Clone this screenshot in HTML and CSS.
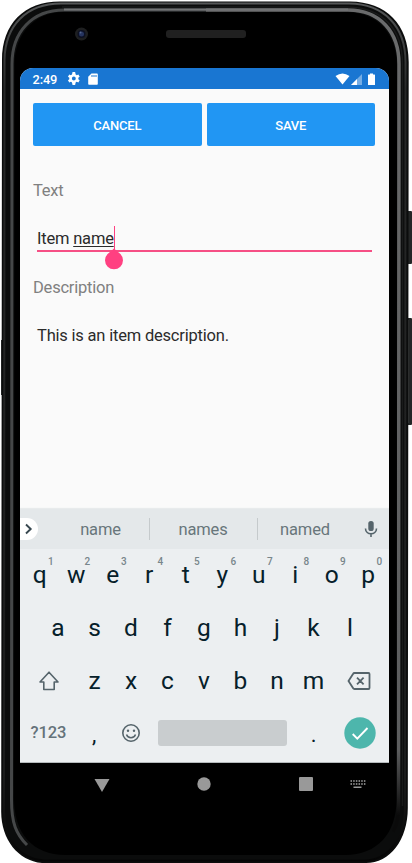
FILE: index.html
```
<!DOCTYPE html>
<html lang="en">
<head>
<meta charset="utf-8">
<title>Edit item</title>
<link rel="stylesheet" href="styles.css">
</head>
<body>
<div class="phone">
<svg class="shell" width="412" height="863" viewBox="0 0 412 863" aria-hidden="true">
  <defs>
    <linearGradient id="rim" x1="0" y1="0" x2="0" y2="1">
      <stop offset="0" stop-color="#6a6b6c"/><stop offset=".9" stop-color="#5c5d5e"/><stop offset=".98" stop-color="#0a0a0a"/>
    </linearGradient>
    <linearGradient id="edge" x1="0" y1="0" x2="0" y2="1">
      <stop offset="0" stop-color="#555758"/><stop offset=".1" stop-color="#272828"/><stop offset=".9" stop-color="#1b1c1c"/><stop offset="1" stop-color="#050505"/>
    </linearGradient>
  </defs>
  <path d="M407 211h4q1 0 1 1v51q0 1-1 1h-4zM407 318h4q1 0 1 1v105q0 1-1 1h-4z" fill="#242626"/>
  <path d="M408.500 320v103" stroke="#3c3e3e"/>
  <path d="M1 340h3v55H1z" fill="#2c2e2e"/>
  <path d="M60 1.500H350C386 2 408.700 24 408.700 62L407.800 808C407.800 840 390 863 366 863H42C18 861 1.200 839 1.200 812L2 60C2 24 24 1.500 60 1.500Z" fill="#0b0c0c"/>
  <path d="M61 3.500H349C384 4 405.500 26 405.500 62L405 808C405 840 387 860.500 364 860.500H44C20 859 4 839 4 812L4.500 60C5 26 26 3.500 61 3.500Z" fill="none" stroke="url(#edge)" stroke-width="2"/>
  <path d="M62 7H348C382 8 402.500 28 402.500 64V806" fill="none" stroke="#191a1a" stroke-width="1.500"/>
  <path d="M206 10H64C32 10 12 32 12 64L11.500 800C11.500 823 16 834 27 845" fill="none" stroke="#454748" stroke-width="3"/>
  <path d="M206 10H348C380 10 399 32 399 64L398.500 800C398.500 817 398 823 393 832" fill="none" stroke="url(#rim)" stroke-width="3.500"/>
  <path d="M64 9.500H348" stroke="#737576" stroke-width="2"/>
  <path d="M64 12H346C376 12 397 32 397 66L396.500 798C397 833 378 855 345 855H66C32 855 14 833 14 798L14.500 66C14.500 34 34 12 64 12Z" fill="#000"/>
  <circle cx="81.500" cy="34" r="6.500" fill="#1e1f20"/><circle cx="81.500" cy="34" r="4" fill="#0c1022"/><circle cx="81.500" cy="34" r="2.500" fill="#26345f"/><circle cx="80.500" cy="32.500" r="1" fill="#52648d"/>
  <rect x="166" y="30" width="80" height="8" rx="3" fill="#202020"/>
</svg>
<main class="screen">
  <header class="status">
    <span class="clock">2:49</span>
    <svg class="gear" width="13" height="13" viewBox="2 2 20 20"><path fill="#fff" fill-rule="evenodd" d="M19.400 13a7.500 7.500 0 0 0 0-2l2.100-1.600-2-3.500-2.500 1a7.300 7.300 0 0 0-1.700-1L14.500 2h-4l-.8 3.900a7.300 7.300 0 0 0-1.700 1l-2.500-1-2 3.500L5.600 11a7.500 7.500 0 0 0 0 2l-2.100 1.600 2 3.500 2.500-1a7.300 7.300 0 0 0 1.700 1l.8 3.900h4l.8-3.900a7.300 7.300 0 0 0 1.700-1l2.500 1 2-3.500zM12.500 9a3 3 0 1 1 0 6 3 3 0 0 1 0-6z"/></svg>
    <svg class="card" width="10" height="12" viewBox="0 0 10 12"><path fill="#fff" fill-rule="evenodd" d="M3.500.5H9q.8 0 .8.800V11q0 .8-.8.800H1q-.8 0-.8-.8V3.800zM3.500 2v2h1V2zm2 0v2h1V2zm2 0v2h1V2z"/></svg>
    <svg class="signals" width="42" height="13" viewBox="0 0 42 13"><path fill="#fff" d="M.5 3Q7.500-2 14.500 3L7.500 11.500z"/><path fill="#75ade5" d="M27 1v11H16z"/><path fill="#fff" d="M22 6v6h-6zM35 1.500V.5h3v1h1.500q.5 0 .5.500v9.500q0 .5-.5.500h-6q-.5 0-.5-.5V2q0-.5.500-.5z"/></svg>
  </header>
  <section class="form">
    <div class="actions"><button>CANCEL</button><button>SAVE</button></div>
    <label class="label first">Text</label>
    <div class="entry focused"><span>Item <u>name</u></span><i class="caret"><svg class="handle" width="20" height="22" viewBox="0 0 20 22"><path fill="#ff4081" d="M10 .5 16.400 6A9 9 0 1 1 3.600 6Z"/></svg></i></div>
    <label class="label second">Description</label>
    <div class="entry desc"><span>This is an item description.</span></div>
  </section>
  <section class="keyboard">
    <div class="suggest">
      <span class="more"><svg width="10" height="12" viewBox="0 0 10 12"><path d="M2 1.500 6.700 6 2 10.500" fill="none" stroke="#37474f" stroke-width="1.900"/></svg></span>
      <span class="word">name</span><span class="word">names</span><span class="word">named</span>
      <svg class="mic" width="14" height="18" viewBox="0 0 14 18"><rect x="4.300" y="1" width="5.400" height="10" rx="2.600" fill="#55646b"/><path d="M1.500 8.500C1.500 15.500 12.500 15.500 12.500 8.500M7 13.500V17" fill="none" stroke="#55646b" stroke-width="1.600"/></svg>
    </div>
    <div class="row">
      <span class="key">q<sup>1</sup></span><span class="key">w<sup>2</sup></span><span class="key">e<sup>3</sup></span><span class="key">r<sup>4</sup></span><span class="key">t<sup>5</sup></span><span class="key">y<sup>6</sup></span><span class="key">u<sup>7</sup></span><span class="key">i<sup>8</sup></span><span class="key">o<sup>9</sup></span><span class="key">p<sup>0</sup></span>
    </div>
    <div class="row">
      <span class="key">a</span><span class="key">s</span><span class="key">d</span><span class="key">f</span><span class="key">g</span><span class="key">h</span><span class="key">j</span><span class="key">k</span><span class="key">l</span>
    </div>
    <div class="row">
      <span class="key wide"><svg width="22" height="22" viewBox="0 0 22 22"><path d="M11 2.200 20 12H16.200V19.500H5.800V12H2Z" fill="none" stroke="#55646b" stroke-width="1.600" stroke-linejoin="round"/></svg></span>
      <span class="key">z</span><span class="key">x</span><span class="key">c</span><span class="key">v</span><span class="key">b</span><span class="key">n</span><span class="key">m</span>
      <span class="key wide"><svg width="24" height="20" viewBox="0 0 24 20"><path d="M7.500 2H21.500Q22.500 2 22.500 3V17Q22.500 18 21.500 18H7.500Q6.500 18 6 17L1.500 10 6 3Q6.500 2 7.500 2ZM10 6.700l6.600 6.600M16.600 6.700l-6.600 6.600" fill="none" stroke="#55646b" stroke-width="1.800"/></svg></span>
    </div>
    <div class="row bottom">
      <span class="key wide mode">?123</span><span class="key punct">,</span>
      <span class="key"><svg width="20" height="20" viewBox="0 0 20 20"><circle cx="10" cy="10" r="8.200" fill="none" stroke="#55646b" stroke-width="1.600"/><circle cx="7" cy="7.800" r="1.200" fill="#55646b"/><circle cx="13" cy="7.800" r="1.200" fill="#55646b"/><path d="M5.500 11.500C7 15.800 13 15.800 14.500 11.500" fill="none" stroke="#55646b" stroke-width="1.500"/></svg></span>
      <span class="space"></span><span class="key punct">.</span>
      <span class="key wide"><svg width="32" height="32" viewBox="0 0 32 32"><circle cx="16" cy="16" r="15.700" fill="#4db6ac"/><path d="m8.700 17 4.600 4.600L23.500 11" fill="none" stroke="#fff" stroke-width="1.900"/></svg></span>
    </div>
  </section>
  <nav class="nav">
    <svg width="369" height="42" viewBox="20 763 369 42"><g fill="#999"><path d="M94.500 779h15l-7.500 13z"/><circle cx="204" cy="784" r="6.700"/><rect x="299" y="777" width="14" height="14" rx="1"/><path d="M353.500 786.500h8v1.500h-8z"/></g><path d="M350.500 781h15M350.500 784h15" stroke="#a5a5a5" stroke-width="1.500" stroke-dasharray="1.500 1.180"/></svg>
  </nav>
</main>
</div>
</body>
</html>
```
FILE: styles.css
```
* { box-sizing: border-box; }
body { margin: 0; background: #fff; font-family: Roboto, sans-serif; }
.phone { position: relative; width: 412px; height: 863px; padding: 68px 23px 0 20px; overflow: hidden; }
.shell { position: absolute; left: 0; top: 0; }
.screen { position: relative; width: 369px; height: 737px; border-radius: 13px 13px 0 0; overflow: hidden; background: #fafafa; }
svg { display: block; }
.status { display: flex; align-items: center; height: 21px; padding: 0 12.500px; background: #1976d2; color: #fff; }
.clock { width: 34px; font-size: 12.800px; letter-spacing: -.1px; font-weight: 500; line-height: 21px; padding-top: 1px; }
.card { margin-left: 8px; }
.signals { margin-left: auto; margin-top: 1px; }
.form { height: 420px; padding: 14px 14px 0 13px; }
.actions { display: grid; grid-template-columns: 1fr 1fr; gap: 5px; height: 43px; }
button { border: 0; border-radius: 2px; background: #2196f3; color: #fff; font: 500 13px Roboto, sans-serif; letter-spacing: -.2px; padding: 1px 0 0; }
.label { display: block; font-size: 16.500px; letter-spacing: -.22px; line-height: 20px; color: #808080; }
.first { margin-top: 35px; }
.entry { display: flex; margin: 0 3px 0 4px; font-size: 16.500px; letter-spacing: -.2px; line-height: 20px; color: #2b2b2b; }
.focused { height: 32px; margin-top: 19px; padding-top: 9px; border-bottom: 2px solid #f64f85; }
u { text-decoration-thickness: 1px; text-underline-offset: 2px; }
.caret { position: relative; width: 1.500px; height: 24px; margin-top: -3px; background: #ff4081; }
.handle { position: absolute; left: -9.500px; top: 22px; }
.second { margin-top: 26px; }
.desc { margin-top: 28px; }
.keyboard { height: 254px; background: #eceff1; border-bottom: 1px solid #b5babc; }
.suggest { display: flex; align-items: center; height: 40px; background: #e4e8ea; box-shadow: 0 -1px 1px #e8ebec; padding-right: 11px; }
.more { display: flex; align-items: center; width: 18px; height: 22px; padding-left: 4px; border-radius: 0 11px 11px 0; background: #fff; margin-right: 8px; }
.word { display: flex; align-items: center; justify-content: center; width: 108px; height: 22px; padding-top: 1px; font-size: 16.500px; letter-spacing: -.15px; color: #68767b; }
.word:nth-child(2) { width: 103px; padding-left: 6px; }
.word:nth-child(3) { padding-right: 1px; }
.word + .word { border-left: 1px solid #c5cacc; }
.word:nth-child(4) { width: 95px; }
.mic { margin-left: auto; }
.row { display: flex; justify-content: center; height: 52.700px; padding-right: 1px; }
.key { position: relative; display: flex; align-items: center; justify-content: center; width: 36.500px; height: 52.500px; font-size: 24.500px; line-height: 52px; color: #06202a; }
.wide { width: 55px; }
sup { position: absolute; left: 26.500px; top: 7px; font-size: 10px; line-height: 12px; font-weight: 500; color: #78868b; }
.mode { font-size: 16.500px; letter-spacing: -.1px; font-weight: 500; color: #64727a; }
.punct { font-size: 22px; padding-top: 4px; }
.space { width: 128.500px; height: 26px; margin: 13px 9px 0; border-radius: 3px; background: #c9cdcf; }
.nav { height: 42px; background: #000; }
```
